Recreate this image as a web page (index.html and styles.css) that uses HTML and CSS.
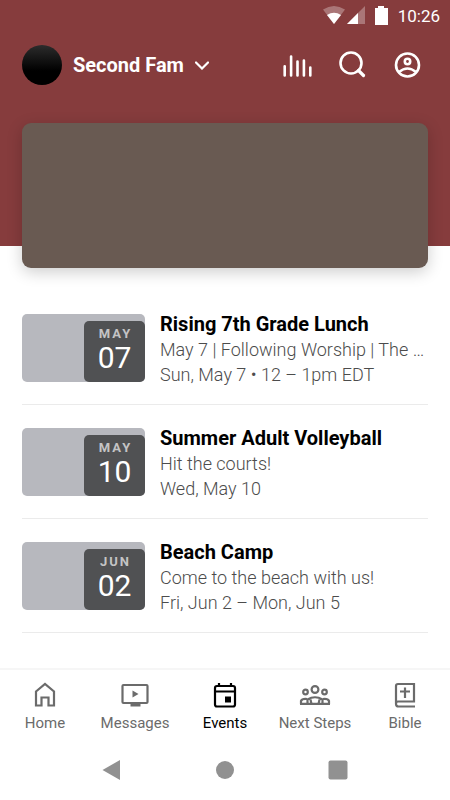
FILE: index.html
```html
<!DOCTYPE html>
<html lang="en">
<head>
  <meta charset="UTF-8">
  <meta name="viewport" content="width=device-width, initial-scale=1">
  <title>Events</title>
  <link rel="stylesheet" href="styles.css">
</head>
<body>
  <header class="header">
    <!-- Status bar -->
    <div class="status-bar">
      <svg class="status-icons" viewBox="0 0 66 20" width="66" height="20">
        <path d="M0 3.500 Q11 -3.500 22 3.500 L11 18 Z" fill="#fff" opacity="0.3" />
        <path d="M4 9 Q11 4.500 18 9 L11 18 Z" fill="#fff" />
        <path d="M42 0 V18 H24 Z" fill="#fff" opacity="0.3" />
        <path d="M35 7 V18 H24 Z" fill="#fff" />
        <path d="M52 2 H55 V0 H61 V2 H65 V19 H52 Z" fill="#fff" />
      </svg>
      <span class="clock">10:26</span>
    </div>

    <!-- Toolbar -->
    <div class="toolbar">
      <button class="campus">
        <span class="avatar"></span>
        <span>Second Fam</span>
        <svg viewBox="0 0 14 10" width="14" height="10" fill="none" stroke="#fff" stroke-width="2.200" stroke-linecap="round">
          <path d="M1 2.500 L7 8.500 L13 2.500" />
        </svg>
      </button>
      <div class="actions">
        <button class="icon-btn" aria-label="Listen">
          <svg viewBox="0 0 32 32" width="32" height="32" stroke="#fff" stroke-width="2.600" stroke-linecap="round">
            <path d="M2.700 17.200V26.400M9.100 7.500V26.400M15.500 12.500V26.400M21.900 11.500V26.400M28.300 18.500V26.400" />
          </svg>
        </button>
        <button class="icon-btn" aria-label="Search">
          <svg viewBox="0 0 32 32" width="32" height="32" fill="none" stroke="#fff" stroke-width="2.600" stroke-linecap="round">
            <circle cx="14" cy="14" r="10.500" />
            <path d="M21.500 21.500 L26.500 26.500" stroke-width="3.200" />
          </svg>
        </button>
        <button class="icon-btn" aria-label="Account">
          <svg viewBox="0 0 32 32" width="32" height="32" fill="none" stroke="#fff" stroke-width="2.600">
            <circle cx="15.500" cy="16" r="11.500" />
            <circle cx="15.500" cy="12.500" r="2.700" />
            <path d="M7 23 Q15.500 16 24 23" />
          </svg>
        </button>
      </div>
    </div>
  </header>

  <main class="content">
    <div class="feature-card"></div>

    <ul class="events">
      <li class="event">
        <div class="thumb">
          <div class="date"><span class="month">MAY</span><span class="day">07</span></div>
        </div>
        <div class="info">
          <h2 class="title">Rising 7th Grade Lunch</h2>
          <p class="detail">May 7 | Following Worship | The …</p>
          <p class="detail">Sun, May 7 • 12 – 1pm EDT</p>
        </div>
      </li>
      <li class="event">
        <div class="thumb">
          <div class="date"><span class="month">MAY</span><span class="day">10</span></div>
        </div>
        <div class="info">
          <h2 class="title">Summer Adult Volleyball</h2>
          <p class="detail">Hit the courts!</p>
          <p class="detail">Wed, May 10</p>
        </div>
      </li>
      <li class="event">
        <div class="thumb">
          <div class="date"><span class="month">JUN</span><span class="day">02</span></div>
        </div>
        <div class="info">
          <h2 class="title">Beach Camp</h2>
          <p class="detail">Come to the beach with us!</p>
          <p class="detail">Fri, Jun 2 – Mon, Jun 5</p>
        </div>
      </li>
    </ul>
  </main>

  <!-- Tabs -->
  <nav class="tabs">
    <a class="tab" href="#home">
      <svg viewBox="0 0 32 28" width="32" height="28" fill="none" stroke="currentColor" stroke-width="2.200">
        <path d="M7 10.500 L16 3 L25 10.500 V24.500 H19.500 V16.500 H12.500 V24.500 H7 Z" />
      </svg>
      Home
    </a>
    <a class="tab" href="#messages">
      <svg viewBox="0 0 32 28" width="32" height="28" fill="none" stroke="currentColor" stroke-width="2.200">
        <rect x="3.500" y="4" width="25" height="18" rx="1" />
        <path d="M13.500 9.500 L19.500 13 L13.500 16.500 Z" fill="currentColor" stroke="none" />
        <path d="M11.500 22 H21.500 V25.500 H11.500 Z" fill="currentColor" stroke="none" />
      </svg>
      Messages
    </a>
    <a class="tab active" href="#events">
      <svg viewBox="0 0 32 28" width="32" height="28" fill="none" stroke="currentColor" stroke-width="2.200">
        <rect x="6" y="5" width="20" height="20.500" rx="2" />
        <path d="M6 10.500 H26 M10 2 V5 M22 2 V5" />
        <path d="M16 15.500 H22 V21.500 H16 Z" fill="currentColor" stroke="none" />
      </svg>
      Events
    </a>
    <a class="tab" href="#next-steps">
      <svg viewBox="0 0 32 28" width="32" height="28" fill="none" stroke="currentColor" stroke-width="2.200">
        <circle cx="16" cy="8.500" r="3.400" />
        <circle cx="6.500" cy="11" r="2.300" />
        <circle cx="25.500" cy="11" r="2.300" />
        <path d="M2 23 V20 Q3 17.500 8 18 M30 23 V20 Q29 17.500 24 18 M1 22.800 H31" />
        <path d="M8.500 23 V18.500 Q16 14 23.500 18.500 V23 M12.500 23 L11.500 18.500 M19.500 23 L20.500 18.500" />
      </svg>
      Next Steps
    </a>
    <a class="tab" href="#bible">
      <svg viewBox="0 0 32 28" width="32" height="28" fill="none" stroke="currentColor" stroke-width="2.200">
        <path d="M26 25.500 H9.500 Q7 25.500 7 23 V5 Q7 3 9 3 H25 V20.500 H9 Q7 20.500 7 23" />
        <path d="M16 6.500 V17 M11 10.500 H21" />
      </svg>
      Bible
    </a>
  </nav>

  <!-- System navigation -->
  <div class="system-nav">
    <button class="system-btn" aria-label="Back">
      <svg viewBox="0 0 20 20" width="20" height="20" fill="#919191"><path d="M18 0 V20 L0.500 10 Z" /></svg>
    </button>
    <button class="system-btn" aria-label="Home screen">
      <svg viewBox="0 0 20 20" width="20" height="20" fill="#919191"><circle cx="10" cy="10" r="9" /></svg>
    </button>
    <button class="system-btn" aria-label="Recent apps">
      <svg viewBox="0 0 20 20" width="20" height="20" fill="#919191"><rect x="0.500" y="0.500" width="19" height="19" rx="2" /></svg>
    </button>
  </div>
</body>
</html>
```
FILE: styles.css
```css
* {
  box-sizing: border-box;
}
body {
  margin: 0;
  min-height: 100vh;
  display: flex;
  flex-direction: column;
  background: #fff;
  color: #000;
  font-family: Roboto, sans-serif;
}
button {
  padding: 0;
  border: none;
  background: none;
  color: inherit;
  font: inherit;
  cursor: pointer;
}
svg {
  display: block;
}
.header {
  height: 246px;
  background: #863c3d;
  color: #fff;
}
.status-bar {
  display: flex;
  justify-content: flex-end;
  align-items: center;
  gap: 9px;
  height: 32px;
  padding-right: 10px;
}
.clock {
  font-size: 17px;
}
.toolbar {
  display: flex;
  justify-content: space-between;
  align-items: center;
  height: 66px;
  padding: 0 26px 0 22px;
}
.campus {
  display: flex;
  align-items: center;
  gap: 11px;
  font-size: 20px;
  font-weight: 700;
}
.avatar {
  width: 40px;
  height: 40px;
  border-radius: 50%;
  background: linear-gradient(#2c2c2c, #000 65%);
}
.actions {
  display: flex;
  gap: 23px;
}
.content {
  flex: 1;
  padding: 0 22px;
}
.feature-card {
  position: relative;
  height: 145px;
  margin-top: -123px;
  border-radius: 9px;
  background: #695a52;
  box-shadow: 0 4px 16px rgba(0, 0, 0, 0.2);
}
.events {
  list-style: none;
  margin: 23px 0 0;
  padding: 0;
}
.event {
  display: flex;
  align-items: center;
  gap: 15px;
  padding: 18px 0 17px;
  border-bottom: 1px solid #ebebeb;
}
.thumb {
  display: flex;
  justify-content: flex-end;
  align-items: flex-end;
  flex: none;
  width: 123px;
  height: 68px;
  border-radius: 5px;
  background: #b7b8be;
}
.date {
  display: flex;
  flex-direction: column;
  align-items: center;
  width: 61px;
  height: 61px;
  padding-top: 4px;
  border-radius: 5px;
  background: #505153;
  color: #fff;
}
.month {
  padding-left: 2px;
  font-size: 13px;
  font-weight: 700;
  line-height: 17px;
  letter-spacing: 2px;
  color: #c4c4c5;
}
.day {
  font-size: 30px;
  line-height: 32px;
}
.info {
  flex: 1;
  min-width: 0;
  padding-top: 2px;
}
.title {
  margin: 0;
  font-size: 20px;
  font-weight: 700;
  line-height: 26px;
}
.detail {
  margin: 0;
  overflow: hidden;
  font-size: 18px;
  font-weight: 300;
  line-height: 25px;
  color: #4c4c4c;
  white-space: nowrap;
  text-overflow: ellipsis;
}
.tabs {
  display: flex;
  height: 72px;
  padding-top: 11px;
  border-top: 2px solid #f6f6f6;
}
.tab {
  display: flex;
  flex: 1;
  flex-direction: column;
  align-items: center;
  gap: 4px;
  font-size: 15px;
  line-height: 20px;
  color: #6b6b6b;
  text-decoration: none;
  white-space: nowrap;
}
.tab.active {
  color: #000;
}
.system-nav {
  display: flex;
  justify-content: center;
  align-items: center;
  gap: 93px;
  height: 60px;
}
```
